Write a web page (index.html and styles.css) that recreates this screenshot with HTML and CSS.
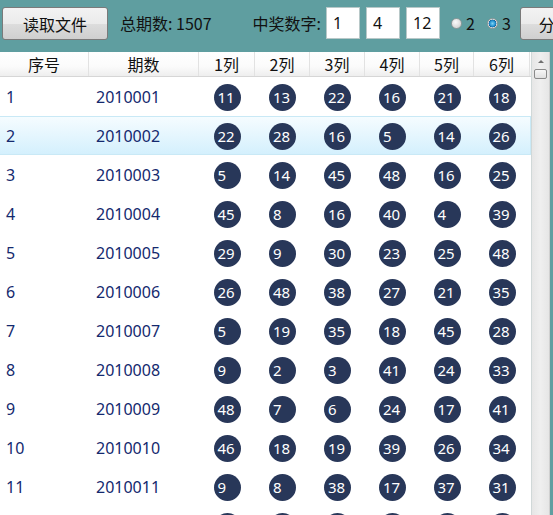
FILE: index.html
```html
<!DOCTYPE html>
<html lang="zh">
<head>
<meta charset="utf-8">
<title>彩票</title>
<link rel="stylesheet" href="styles.css">
</head>
<body>
<div class="toolbar">
  <button class="btn btn-read">读取文件</button>
  <span class="label total">总期数: 1507</span>
  <span class="label win">中奖数字:</span>
  <div class="tb first">1</div>
  <div class="tb">4</div>
  <div class="tb">12</div>
  <span class="radio"></span><span class="label rlabel">2</span>
  <span class="radio checked"></span><span class="label rlabel">3</span>
  <button class="btn btn-split">分析</button>
</div>
<div class="main">
  <div class="list">
    <div class="row header">
      <div class="hc">序号</div><div class="hc">期数</div><div class="hc">1列</div><div class="hc">2列</div><div class="hc">3列</div><div class="hc">4列</div><div class="hc">5列</div><div class="hc">6列</div>
    </div>
    <div class="row"><div class="c n">1</div><div class="c p">2010001</div><div class="c"><span class="ball">11</span></div><div class="c"><span class="ball">13</span></div><div class="c"><span class="ball">22</span></div><div class="c"><span class="ball">16</span></div><div class="c"><span class="ball">21</span></div><div class="c"><span class="ball">18</span></div></div>
    <div class="row sel"><div class="c n">2</div><div class="c p">2010002</div><div class="c"><span class="ball">22</span></div><div class="c"><span class="ball">28</span></div><div class="c"><span class="ball">16</span></div><div class="c"><span class="ball">5</span></div><div class="c"><span class="ball">14</span></div><div class="c"><span class="ball">26</span></div></div>
    <div class="row"><div class="c n">3</div><div class="c p">2010003</div><div class="c"><span class="ball">5</span></div><div class="c"><span class="ball">14</span></div><div class="c"><span class="ball">45</span></div><div class="c"><span class="ball">48</span></div><div class="c"><span class="ball">16</span></div><div class="c"><span class="ball">25</span></div></div>
    <div class="row"><div class="c n">4</div><div class="c p">2010004</div><div class="c"><span class="ball">45</span></div><div class="c"><span class="ball">8</span></div><div class="c"><span class="ball">16</span></div><div class="c"><span class="ball">40</span></div><div class="c"><span class="ball">4</span></div><div class="c"><span class="ball">39</span></div></div>
    <div class="row"><div class="c n">5</div><div class="c p">2010005</div><div class="c"><span class="ball">29</span></div><div class="c"><span class="ball">9</span></div><div class="c"><span class="ball">30</span></div><div class="c"><span class="ball">23</span></div><div class="c"><span class="ball">25</span></div><div class="c"><span class="ball">48</span></div></div>
    <div class="row"><div class="c n">6</div><div class="c p">2010006</div><div class="c"><span class="ball">26</span></div><div class="c"><span class="ball">48</span></div><div class="c"><span class="ball">38</span></div><div class="c"><span class="ball">27</span></div><div class="c"><span class="ball">21</span></div><div class="c"><span class="ball">35</span></div></div>
    <div class="row"><div class="c n">7</div><div class="c p">2010007</div><div class="c"><span class="ball">5</span></div><div class="c"><span class="ball">19</span></div><div class="c"><span class="ball">35</span></div><div class="c"><span class="ball">18</span></div><div class="c"><span class="ball">45</span></div><div class="c"><span class="ball">28</span></div></div>
    <div class="row"><div class="c n">8</div><div class="c p">2010008</div><div class="c"><span class="ball">9</span></div><div class="c"><span class="ball">2</span></div><div class="c"><span class="ball">3</span></div><div class="c"><span class="ball">41</span></div><div class="c"><span class="ball">24</span></div><div class="c"><span class="ball">33</span></div></div>
    <div class="row"><div class="c n">9</div><div class="c p">2010009</div><div class="c"><span class="ball">48</span></div><div class="c"><span class="ball">7</span></div><div class="c"><span class="ball">6</span></div><div class="c"><span class="ball">24</span></div><div class="c"><span class="ball">17</span></div><div class="c"><span class="ball">41</span></div></div>
    <div class="row"><div class="c n">10</div><div class="c p">2010010</div><div class="c"><span class="ball">46</span></div><div class="c"><span class="ball">18</span></div><div class="c"><span class="ball">19</span></div><div class="c"><span class="ball">39</span></div><div class="c"><span class="ball">26</span></div><div class="c"><span class="ball">34</span></div></div>
    <div class="row"><div class="c n">11</div><div class="c p">2010011</div><div class="c"><span class="ball">9</span></div><div class="c"><span class="ball">8</span></div><div class="c"><span class="ball">38</span></div><div class="c"><span class="ball">17</span></div><div class="c"><span class="ball">37</span></div><div class="c"><span class="ball">31</span></div></div>
    <div class="row"><div class="c n"></div><div class="c p"></div><div class="c"><span class="ball"></span></div><div class="c"><span class="ball"></span></div><div class="c"><span class="ball"></span></div><div class="c"><span class="ball"></span></div><div class="c"><span class="ball"></span></div><div class="c"><span class="ball"></span></div></div>
  </div>
  <div class="scrollbar">
    <div class="arrow"></div>
    <div class="thumb"></div>
  </div>
</div>
</body>
</html>
```
FILE: styles.css
```css
html, body {
  margin: 0;
  padding: 0;
}
body {
  width: 553px;
  height: 515px;
  overflow: hidden;
  background: #5f9ea0;
  font-family: "Noto Sans", "Noto Sans CJK SC", sans-serif;
  font-size: 16px;
}
.toolbar {
  height: 45px;
  padding-top: 7px;
  display: flex;
  align-items: flex-start;
  white-space: nowrap;
  overflow: hidden;
}
.toolbar > * {
  flex-shrink: 0;
}
.btn {
  height: 33px;
  border: 1px solid #7a7a7a;
  border-radius: 3px;
  background: linear-gradient(#f3f3f3 0%, #ebebeb 50%, #dddddd 51%, #cfcfcf 100%);
  font-family: "Noto Sans CJK SC", sans-serif;
  font-size: 16px;
  color: #111;
  padding: 0;
  box-sizing: border-box;
}
.btn-read {
  margin-left: 2px;
  width: 106px;
  text-align: center;
}
.btn-split {
  margin-left: 9px;
  width: 100px;
  text-align: left;
  padding-left: 18px;
}
.label {
  line-height: 33px;
  color: #111;
  font-family: "Noto Sans CJK SC", sans-serif;
  font-size: 16px;
}
.total {
  margin-left: 12px;
}
.win {
  margin-left: 41px;
}
.tb {
  width: 34px;
  height: 32px;
  box-sizing: border-box;
  background: #fff;
  border: 1px solid #b8c8c8;
  margin-left: 6px;
  padding-left: 6px;
  line-height: 30px;
  color: #111;
  font-family: "Noto Sans", sans-serif;
  font-size: 16px;
}
.tb.first {
  margin-left: 5px;
}
.radio {
  width: 11px;
  height: 11px;
  box-sizing: border-box;
  border-radius: 50%;
  border: 1px solid #8e9a9a;
  background: radial-gradient(circle at 40% 35%, #fafafa 0%, #d8d8d8 70%, #bcbcbc 100%);
  margin-top: 11px;
  margin-left: 11px;
}
.radio + .rlabel {
  margin-left: 4px;
}
.radio.checked {
  margin-left: 12px;
  background: radial-gradient(circle, #7fd3f5 0%, #1f8fcf 45%, #1a5f90 60%, #e8e8e8 65%, #c8c8c8 100%);
}
.main {
  display: flex;
  height: 463px;
}
.list {
  width: 532px;
  background: #fff;
  overflow: hidden;
  border-right: 1px solid #d0d8d8;
  box-sizing: border-box;
}
.row {
  display: grid;
  grid-template-columns: 89px 110px 56px 55px 55px 55px 54px 56px;
  height: 39px;
  align-items: center;
  box-sizing: border-box;
}
.row.header {
  height: 25px;
  background: linear-gradient(#ffffff 0%, #fbfbfb 60%, #eeeeee 100%);
  border-bottom: 1px solid #d6d6d6;
  align-items: stretch;
}
.hc {
  border-right: 1px solid #e2e2e2;
  text-align: center;
  line-height: 24px;
  color: #111;
  font-family: "Noto Sans CJK SC", sans-serif;
  font-size: 16px;
}
.row.sel {
  background: linear-gradient(#f5fcff 0%, #e8f7fe 40%, #d4f0fd 100%);
  border: 1px solid #c9e9f6;
  border-left: none;
}
.c {
  color: #14296e;
  font-size: 16px;
}
.c.n {
  padding-left: 6px;
}
.c.p {
  padding-left: 7px;
}
.c:not(.n):not(.p) {
  display: flex;
  justify-content: center;
}
.ball {
  width: 27px;
  height: 27px;
  border-radius: 50%;
  background: #283759;
  color: #fff;
  font-size: 15px;
  line-height: 27px;
  box-sizing: border-box;
  padding-left: 4px;
  text-align: left;
  margin-top: 2px;
}
.scrollbar {
  width: 17px;
  background: linear-gradient(90deg, #e6e6e6, #efefef 50%, #e6e6e6);
  border-right: 1px solid #d0d0d0;
}
.arrow {
  width: 0;
  height: 0;
  margin: 8px auto 0;
  border-left: 3px solid transparent;
  border-right: 3px solid transparent;
  border-bottom: 3px solid #707070;
}
.thumb {
  width: 13px;
  height: 10px;
  margin: 6px auto 0;
  box-sizing: border-box;
  border: 1px solid #8a8a8a;
  border-radius: 2px;
  background: linear-gradient(#f7f7f7, #e0e0e0);
}
```
